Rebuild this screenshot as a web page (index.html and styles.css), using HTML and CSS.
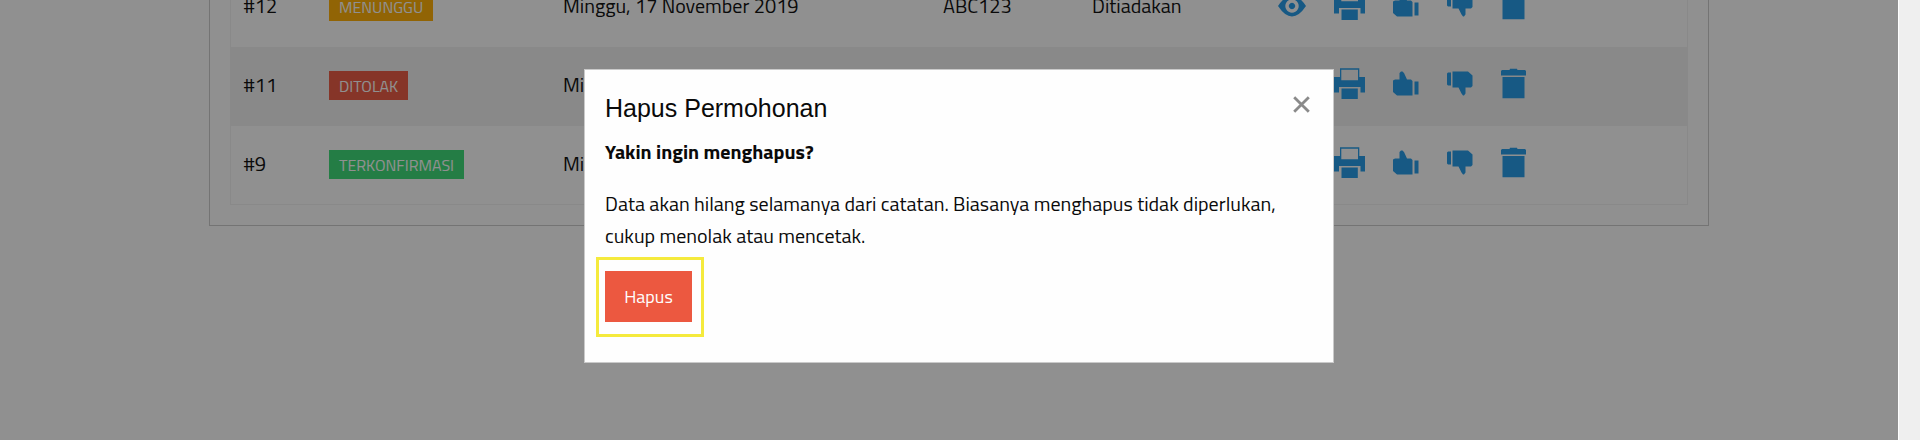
FILE: index.html
```
<!DOCTYPE html>
<html lang="id">
<head>
<meta charset="utf-8">
<title>Permohonan</title>
<link rel="stylesheet" href="styles.css">
</head>
<body>
<svg class="sprite" aria-hidden="true">
  <symbol id="eye" viewBox="0 0 28 32"><path fill-rule="evenodd" d="M0 17 Q7 6.500 14 6.500 T28 17 Q21 27.500 14 27.500 T0 17Z M14 10.300 a6.700 6.700 0 1 0 .01 0Z M14 13.800 a3.200 3.200 0 1 1 -.01 0Z"/></symbol>
  <symbol id="print" viewBox="0 0 31 32"><path fill-rule="evenodd" d="M6 .3H25.300V9H31V24.500H26.500V19H5V24.500H0V9H6Z M7.300 1.800V12.300H24V1.800Z M7.500 20.500H23.800V31H7.500Z"/></symbol>
  <symbol id="up" viewBox="0 0 26 32"><path d="M0 12.500L2 11.500H6.500V5L8 3.500H9.500L11 5L14 11.500H18L19.500 13V27.500H4L0 24Z M21.500 13.500H25.500V26.500H21.500Z"/></symbol>
  <symbol id="down" viewBox="0 0 26 32"><path d="M0 5.500L1 4.500H4V17.500H1L0 16.500Z M5.500 3.500H21L25.500 7.500V18L24 19.500H18.500V25.500L17 27.500H16L14.500 25.500L11.500 19.500H5.500Z"/></symbol>
  <symbol id="trash" viewBox="0 0 25 32"><path d="M0 3L1 2H8.500L9 .800H16L16.500 2H24L25 3V7.500H0Z M1.500 9H23.500V30.300H1.500Z"/></symbol>
</svg>
<main class="page">
  <section class="panel">
    <div class="table">
      <div class="row">
        <span class="cell">#12</span><span class="status"><b class="badge warning">MENUNGGU</b></span><span class="cell">Minggu, 17 November 2019</span><span class="cell">ABC123</span><span class="cell">Ditiadakan</span>
        <span class="actions"><svg class="i-eye"><use href="#eye"/></svg><svg class="i-print"><use href="#print"/></svg><svg class="i-up"><use href="#up"/></svg><svg class="i-down"><use href="#down"/></svg><svg class="i-trash"><use href="#trash"/></svg></span>
      </div>
      <div class="row striped">
        <span class="cell">#11</span><span class="status"><b class="badge alert">DITOLAK</b></span><span class="cell">Mi</span><span></span><span></span>
        <span class="actions"><svg class="i-eye"><use href="#eye"/></svg><svg class="i-print"><use href="#print"/></svg><svg class="i-up"><use href="#up"/></svg><svg class="i-down"><use href="#down"/></svg><svg class="i-trash"><use href="#trash"/></svg></span>
      </div>
      <div class="row">
        <span class="cell">#9</span><span class="status"><b class="badge success">TERKONFIRMASI</b></span><span class="cell">Mi</span><span></span><span></span>
        <span class="actions"><svg class="i-eye"><use href="#eye"/></svg><svg class="i-print"><use href="#print"/></svg><svg class="i-up"><use href="#up"/></svg><svg class="i-down"><use href="#down"/></svg><svg class="i-trash"><use href="#trash"/></svg></span>
      </div>
    </div>
  </section>
</main>
<div class="overlay"></div>
<div class="scrollbar"></div>
<div class="modal" role="dialog">
  <div class="modal-head">
    <h1>Hapus Permohonan</h1>
    <svg class="close" viewBox="0 0 17 17"><path d="M1.200 1.200L15.800 15.800M15.800 1.200L1.200 15.800"/></svg>
  </div>
  <p class="lead">Yakin ingin menghapus?</p>
  <p class="text">Data akan hilang selamanya dari catatan. Biasanya menghapus tidak diperlukan,<br>cukup menolak atau mencetak.</p>
  <div class="highlight"><button class="button">Hapus</button></div>
</div>
</body>
</html>
```
FILE: styles.css
```
* { box-sizing: border-box; }
body {
  margin: 0;
  height: 440px;
  overflow: hidden;
  background: #fefefe;
  color: #0a0a0a;
  font: 20px/32px "Titillium Web", Roboto, sans-serif;
}
.sprite { display: none; }
.page { height: 440px; padding-left: 209px; display: flex; align-items: flex-start; }
.panel {
  width: 1500px;
  height: 226px;
  padding: 0 20px 20px;
  border: 1px solid #cacaca;
  border-top: 0;
  display: flex;
  flex-direction: column;
  justify-content: flex-end;
  overflow: hidden;
}
.table { border: 1px solid #f1f1f1; border-top: 0; flex-shrink: 0; }
.row {
  display: grid;
  grid-template-columns: 85.5px 234px 380px 149px 185px 1fr;
  align-items: center;
  height: 79px;
  padding-left: 12.5px;
}
.row:last-child { height: 78px; }
.striped { background: #f1f1f1; }
.cell { margin-top: -3px; }
.status { display: flex; margin-top: -2px; }
.badge {
  height: 29px;
  padding: 0 10px;
  color: #fefefe;
  font-size: 16px;
  font-weight: 400;
  line-height: 31px;
}
.warning { background: #ffae00; }
.alert { background: #ec5840; }
.success { background: #3adb76; }
.actions { display: flex; height: 32px; margin-top: -5px; fill: #2199e8; }
.actions svg { height: 32px; flex: none; }
.i-eye { width: 28px; margin: 0 28px 0 .5px; }
.i-print { width: 31px; margin-right: 28.500px; }
.i-up { width: 26px; margin-right: 28px; }
.i-down { width: 26px; margin-right: 27.500px; }
.i-trash { width: 25px; }
.overlay { position: absolute; inset: 0 22px 0 0; background: rgba(10, 10, 10, .45); }
.scrollbar { position: absolute; inset: 0 0 0 auto; width: 21px; background: #efefef; }
.modal {
  position: absolute;
  left: 584px;
  top: 69px;
  width: 750px;
  height: 294px;
  padding: 20px;
  border: 1px solid #cacaca;
  background: #fefefe;
}
.modal-head { display: flex; justify-content: space-between; }
h1 { margin: 0; font: 400 25px/36px "Liberation Sans", Arial, sans-serif; }
.close { width: 17px; height: 17px; margin: 6px 3px 0 0; stroke: #8a8a8a; stroke-width: 2.800; }
p { margin: 0 0 20px; white-space: nowrap; }
.lead { margin-top: 10px; font-weight: 700; }
.text { margin-bottom: 0; }
.highlight {
  width: 108px;
  height: 80px;
  margin: 5px 0 0 -9px;
  padding: 11px 6px;
  border: 3px solid #f5ea3c;
}
.button {
  display: block;
  width: 87px;
  height: 51px;
  padding: 0;
  border: 0;
  background: #ec5840;
  color: #fefefe;
  font: 18px/51px "Titillium Web", Roboto, sans-serif;
}
```
